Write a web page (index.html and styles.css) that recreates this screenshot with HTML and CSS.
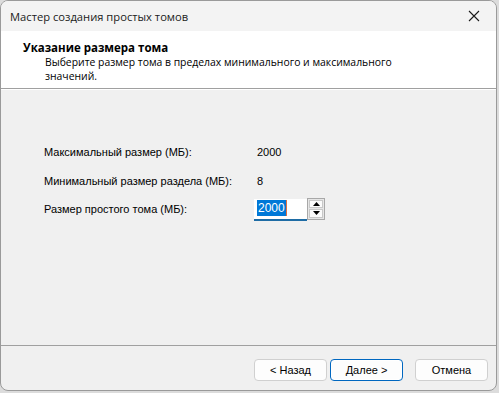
FILE: index.html
```html
<!DOCTYPE html>
<html lang="ru">
  <head>
    <meta charset="UTF-8" />
    <title>Мастер создания простых томов</title>
    <link rel="stylesheet" href="styles.css">
  </head>
  <body>
    <div class="window">
      <!-- Title bar -->
      <div class="titlebar">
        <span class="title">Мастер создания простых томов</span>
        <span class="close-btn">
          <svg width="12" height="12" viewBox="0 0 12 12">
            <path d="M1 1 L11 11 M11 1 L1 11" stroke="#1a1a1a" stroke-width="1.1" fill="none" />
          </svg>
        </span>
      </div>

      <!-- Wizard header -->
      <div class="header">
        <h1>Указание размера тома</h1>
        <p>Выберите размер тома в пределах минимального и максимального<br />значений.</p>
      </div>

      <!-- Page body -->
      <div class="content">
        <div class="row">
          <span class="label">Максимальный размер (МБ):</span>
          <span class="value">2000</span>
        </div>
        <div class="row">
          <span class="label">Минимальный размер раздела (МБ):</span>
          <span class="value">8</span>
        </div>
        <div class="row row-input">
          <span class="label">Размер простого тома (МБ):</span>
          <div class="spin">
            <div class="spin-field"><span class="selected">2000</span></div>
            <div class="spin-buttons">
              <span class="spin-btn">
                <svg width="7" height="4" viewBox="0 0 7 4"><path d="M0 4 L3.5 0 L7 4 Z" fill="#000" /></svg>
              </span>
              <span class="spin-btn">
                <svg width="7" height="4" viewBox="0 0 7 4"><path d="M0 0 L7 0 L3.5 4 Z" fill="#000" /></svg>
              </span>
            </div>
          </div>
        </div>
      </div>

      <!-- Footer buttons -->
      <div class="footer">
        <button class="btn">&lt; Назад</button>
        <button class="btn btn-default">Далее &gt;</button>
        <button class="btn btn-cancel">Отмена</button>
      </div>
    </div>
  </body>
</html>
```

FILE: styles.css
```css
body {
  margin: 0;
  padding: 0;
  background: #dcdcdc;
  font-family: "Liberation Sans", Arial, sans-serif;
}

.window {
  width: 495px;
  height: 389px;
  border: 1px solid #9a9a9a;
  border-radius: 8px;
  background: #f0f0f0;
  display: flex;
  flex-direction: column;
  overflow: hidden;
}

.titlebar {
  height: 30px;
  background: #f3f3f3;
  display: flex;
  align-items: center;
  justify-content: space-between;
  padding: 0 8px 0 9px;
  flex-shrink: 0;
}

.title {
  font-family: "Open Sans", "Noto Sans", sans-serif;
  font-size: 11.2px;
  color: #1b1b1b;
}

.close-btn {
  width: 28px;
  display: flex;
  justify-content: center;
  align-items: center;
}

.header {
  background: #ffffff;
  height: 58px;
  box-sizing: border-box;
  padding: 9px 0 0 22px;
  border-bottom: 1px solid #a0a0a0;
  flex-shrink: 0;
}

.header h1 {
  margin: 0;
  font-family: "Open Sans", "Noto Sans", sans-serif;
  font-size: 11.5px;
  font-weight: bold;
  color: #000;
  line-height: 15px;
}

.header p {
  margin: 0 0 0 22px;
  font-family: "Open Sans", "Noto Sans", sans-serif;
  font-size: 10.4px;
  line-height: 14px;
  color: #000;
}

.content {
  flex: 1;
  padding: 53px 0 0 43px;
  border-top: 1px solid #ffffff;
  border-bottom: 1px solid #a0a0a0;
  display: flex;
  flex-direction: column;
  gap: 12px;
}

.row {
  display: flex;
  align-items: center;
  height: 17px;
  font-size: 11px;
  color: #000;
}

.row-input {
  height: 22px;
  margin-top: -3px;
}

.label {
  width: 212px;
}

.value {
  padding-left: 1px;
}

.spin {
  display: flex;
  margin-left: -2px;
  margin-top: 1px;
}

.spin-field {
  width: 53px;
  height: 22px;
  box-sizing: border-box;
  background: #ffffff;
  border-bottom: 2px solid #1e6ca5;
  padding: 1px 0 0 3px;
}

.selected {
  display: inline-block;
  background: #0078d7;
  color: #ffffff;
  font-size: 12px;
  line-height: 16px;
  padding: 0 1px;
  border-right: 1px solid #e07040;
}

.spin-buttons {
  display: flex;
  flex-direction: column;
  width: 18px;
  height: 22px;
  border: 1px solid #a8a8a8;
  box-sizing: border-box;
  margin-top: -1px;
  background: #e6e6e6;
  gap: 1px;
  padding: 1px;
}

.spin-btn {
  flex: 1;
  display: flex;
  align-items: center;
  justify-content: center;
  background: #fbfbfb;
  border: 1px solid #c8c8c8;
}

.footer {
  height: 44px;
  display: flex;
  align-items: center;
  padding: 3px 0 0 253px;
  box-sizing: border-box;
  flex-shrink: 0;
}

.btn {
  width: 73px;
  height: 22px;
  background: #fdfdfd;
  border: 1px solid #d0d0d0;
  border-radius: 4px;
  font-family: "Liberation Sans", Arial, sans-serif;
  font-size: 11px;
  color: #000;
  padding: 0;
  margin-right: 3px;
}

.btn-default {
  border: 1px solid #0067c0;
  box-shadow: inset 0 0 0 1px #ffffff;
}

.btn-cancel {
  margin-left: 9px;
}
```
